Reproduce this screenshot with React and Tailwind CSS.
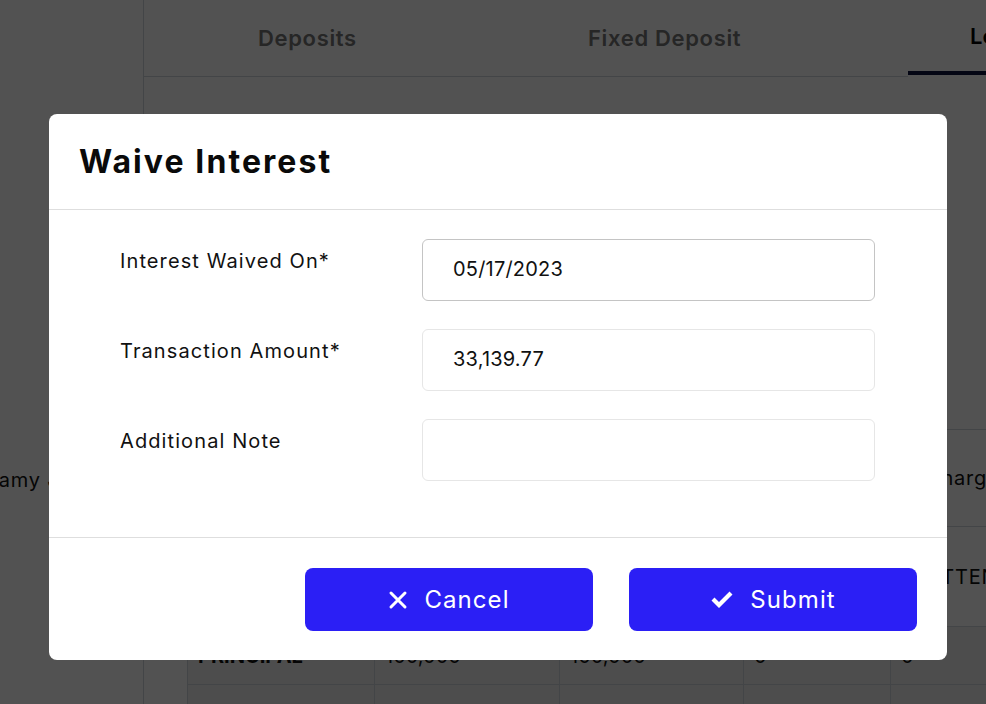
import React from "react";

const font = { fontFamily: "Inter, 'Noto Sans', sans-serif" };

const Background = () => (
  <div className="flex h-[704px] w-[986px] overflow-hidden bg-white text-[#111]">
    {/* left panel */}
    <div className="w-[144px] shrink-0 overflow-hidden border-r border-gray-300 pt-[465px]">
      <div className="-ml-[15px] whitespace-nowrap text-[20px] tracking-[0.04em]">Samy Jones</div>
    </div>

    {/* main */}
    <div className="flex-1 min-w-0">
      <div className="flex h-[77px] items-end">
        <div className="flex h-full w-[764px] shrink-0 items-center border-b border-gray-300 pl-[114px] text-[22px] font-semibold tracking-[0.03em] text-[#777]">
          <span className="w-[330px]">Deposits</span>
          <span>Fixed Deposit</span>
        </div>
        <div className="flex h-full flex-1 flex-col justify-between pl-[62px] pt-[20px]">
          <span className="text-[22px] font-semibold text-black">Loans</span>
          <div className="-ml-[62px] mb-[2px] h-[4px] bg-[#0d1440]"></div>
        </div>
      </div>

      <div className="pl-[43px] pt-[352px]">
        <table className="w-[903px] table-fixed border-collapse text-[20px]">
          <colgroup>
            <col className="w-[187px]" />
            <col className="w-[185px]" />
            <col className="w-[184px]" />
            <col className="w-[147px]" />
            <col className="w-[200px]" />
          </colgroup>
          <tbody>
            <tr className="h-[97px]">
              <td className="border border-gray-300"></td>
              <td className="border border-gray-300"></td>
              <td className="border border-gray-300"></td>
              <td className="border border-gray-300"></td>
              <td className="border border-gray-300 whitespace-nowrap pl-[6px] tracking-[0.04em]">Discharged</td>
            </tr>
            <tr className="h-[100px]">
              <td className="border border-gray-300"></td>
              <td className="border border-gray-300"></td>
              <td className="border border-gray-300"></td>
              <td className="border border-gray-300"></td>
              <td className="border border-gray-300 whitespace-nowrap pl-[10px] tracking-[0.04em]">WRITTEN OFF</td>
            </tr>
            <tr className="h-[58px] bg-[#f0f0f0]">
              <td className="border border-gray-300 px-[10px] font-bold">PRINCIPAL</td>
              <td className="border border-gray-300 px-[10px]">100,000</td>
              <td className="border border-gray-300 px-[10px]">100,000</td>
              <td className="border border-gray-300 px-[10px]">0</td>
              <td className="border border-gray-300 px-[10px]">0</td>
            </tr>
            <tr className="h-[58px] bg-[#f0f0f0]">
              <td className="border border-gray-300 px-[10px] pt-[12px] align-top font-bold">INTEREST</td>
              <td className="border border-gray-300 px-[10px] pt-[12px] align-top">942,547.25</td>
              <td className="border border-gray-300 px-[10px] pt-[12px] align-top">935,408.18</td>
              <td className="border border-gray-300 px-[10px] pt-[12px] align-top">0</td>
              <td className="border border-gray-300 px-[10px] pt-[12px] align-top">0</td>
            </tr>
          </tbody>
        </table>
      </div>
    </div>
  </div>
);

const Field = ({ label, value, strong }) => (
  <div className="flex items-start">
    <label className="w-[302px] shrink-0 pt-[7px] text-[20px] tracking-[0.055em] text-[#111]">{label}</label>
    <div
      className={`flex h-[62px] w-[453px] items-center rounded-[6px] border bg-white px-[30px] pb-[2px] text-[20px] tracking-[0.01em] text-[#111] ${
        strong ? "border-[#c4c4c4]" : "border-[#e6e6e6]"
      }`}
    >
      {value}
    </div>
  </div>
);

export default function App() {
  return (
    <div className="relative h-[704px] w-[986px] overflow-hidden" style={font}>
      <Background />

      {/* overlay */}
      <div className="absolute inset-0 bg-black/[0.68]"></div>

      {/* modal */}
      <div className="absolute left-[49px] top-[114px] w-[898px] rounded-[8px] bg-white">
        <div className="flex h-[96px] items-center border-b border-[#dedede] px-[30px]">
          <h2 className="text-[32px] font-bold tracking-[0.065em] text-[#0a0a0a]">Waive Interest</h2>
        </div>

        <div className="flex flex-col gap-[28px] pl-[71px] pt-[29px] pb-[56px]">
          <Field label="Interest Waived On*" value="05/17/2023" strong />
          <Field label="Transaction Amount*" value="33,139.77" />
          <Field label="Additional Note" value="" />
        </div>

        <div className="flex justify-end gap-[36px] border-t border-[#dedede] pt-[30px] pb-[29px] pr-[30px]">
          <button className="flex h-[63px] w-[288px] items-center justify-center gap-[16px] rounded-[8px] bg-[#2b1ff5] text-[24px] tracking-[0.045em] text-white">
            <svg width="20" height="20" viewBox="0 0 20 20" fill="none" stroke="white" strokeWidth="3" strokeLinecap="round">
              <path d="M3 3 L17 17 M17 3 L3 17" />
            </svg>
            <span>Cancel</span>
          </button>
          <button className="flex h-[63px] w-[288px] items-center justify-center gap-[16px] rounded-[8px] bg-[#2b1ff5] text-[24px] tracking-[0.045em] text-white">
            <svg width="24" height="20" viewBox="0 0 24 20" fill="white">
              <path d="M1.5 10.5 L4.5 7.5 L9 12 L19.5 1.5 L22.5 4.5 L9 18 Z" />
            </svg>
            <span>Submit</span>
          </button>
        </div>
      </div>
    </div>
  );
}
